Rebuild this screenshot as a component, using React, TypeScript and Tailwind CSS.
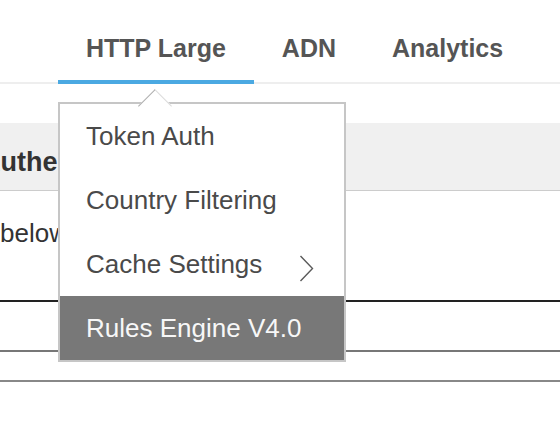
import React from "react";

const tabs = [
  { label: "HTTP Large", active: true },
  { label: "ADN", active: false },
  { label: "Analytics", active: false },
];

const items = [
  { label: "Token Auth", sub: false, active: false },
  { label: "Country Filtering", sub: false, active: false },
  { label: "Cache Settings", sub: true, active: false },
  { label: "Rules Engine V4.0", sub: false, active: true },
];

export default function App() {
  return (
    <div className="relative w-[560px] h-[422px] overflow-hidden bg-white font-['Liberation_Sans',Arial,sans-serif]">
      {/* Tab bar */}
      <div className="flex h-[84px] border-b-2 border-[#eeeeee] pl-[58px]">
        {tabs.map((t) => (
          <div
            key={t.label}
            className={
              t.active
                ? "h-[84px] -mb-[2px] px-[28px] pt-[36px] border-b-4 border-[#4ba9e2] text-[25px] leading-none font-bold text-[#555555] whitespace-nowrap"
                : "h-[84px] -mb-[2px] px-[28px] pt-[36px] border-b-4 border-transparent text-[25px] leading-none font-bold text-[#555555] whitespace-nowrap"
            }
          >
            {t.label}
          </div>
        ))}
      </div>

      <div className="h-[39px]" />

      {/* Grey header band */}
      <div className="h-[68px] border-b border-[#cccccc] bg-[#f0f0f0] pt-[26px] whitespace-nowrap">
        <span className="-ml-[19px] inline-block text-[27px] leading-none font-bold text-[#333333]">
          Authentication
        </span>
      </div>

      {/* Description */}
      <div className="h-[109px] pt-[29px] whitespace-nowrap">
        <span className="text-[26px] leading-none text-[#333333]">below</span>
      </div>

      {/* Table lines */}
      <div className="h-[50px] border-t-2 border-[#222222]" />
      <div className="h-[30px] border-t-2 border-[#777777]" />
      <div className="h-[30px] border-t-2 border-[#888888]" />

      {/* Dropdown menu */}
      <div className="absolute left-[58px] top-[102px] w-[288px] h-[260px] border-2 border-[#c6c6c6] bg-white">
        <div className="absolute left-[83px] -top-[10px] w-[24px] h-[24px] rotate-45 bg-white border-l border-t border-l-[#b0b0b0] border-t-[#dcdcdc]" />
        <div className="relative flex flex-col">
          {items.map((it) => (
            <div
              key={it.label}
              className={
                it.active
                  ? "flex h-[64px] items-center justify-between pl-[26px] pr-[30px] bg-[#787878] text-[#f7f7f7] text-[26px] leading-none whitespace-nowrap"
                  : "flex h-[64px] items-center justify-between pl-[26px] pr-[30px] text-[#4a4a4a] text-[26px] leading-none whitespace-nowrap"
              }
            >
              <span>{it.label}</span>
              {it.sub && (
                <svg
                  width="15"
                  height="27"
                  viewBox="0 0 15 27"
                  className="mt-[8px]"
                  fill="none"
                >
                  <polyline
                    points="1.5,1 13.5,13.5 1.5,26"
                    stroke="#5a5a5a"
                    strokeWidth="1.4"
                  />
                </svg>
              )}
            </div>
          ))}
        </div>
      </div>
    </div>
  );
}
